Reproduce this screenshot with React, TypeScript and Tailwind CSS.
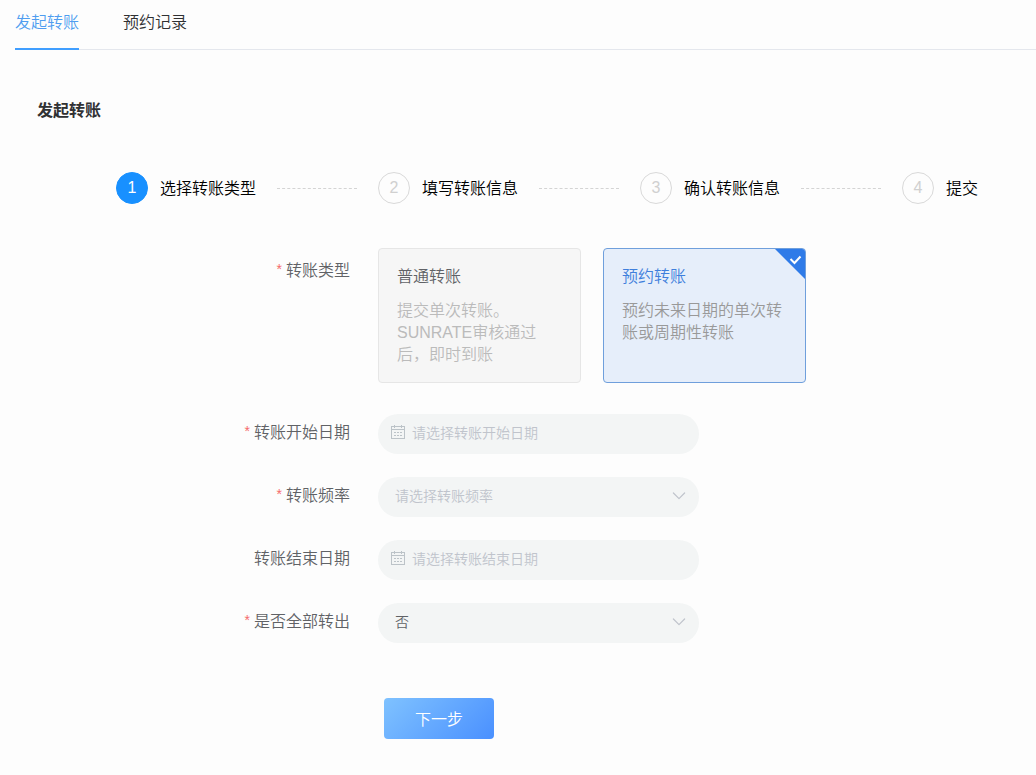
import { useState } from "react";
import type { ReactNode } from "react";
import clsx from "clsx";

const tabs = ["发起转账", "预约记录"];

const steps = ["选择转账类型", "填写转账信息", "确认转账信息", "提交"];

const transferTypes = [
  {
    value: "normal",
    title: "普通转账",
    description: "提交单次转账。SUNRATE审核通过后，即时到账",
  },
  {
    value: "scheduled",
    title: "预约转账",
    description: "预约未来日期的单次转账或周期性转账",
  },
];

function CalendarIcon() {
  return (
    <svg
      className="pointer-events-none absolute left-3 top-2.5 h-4 w-4 text-[#bcc3c8]"
      viewBox="0 0 16 16"
      fill="none"
      stroke="currentColor"
      shapeRendering="crispEdges"
      aria-hidden="true"
    >
      <path d="M1.5 2.5h13v12h-13zM1.5 5.5h13M4.5 0.5v3M11.5 0.5v3" />
      <path d="M4 8.5h2M7 8.5h2M10 8.5h2M4 11.5h2M7 11.5h2M10 11.5h2" />
    </svg>
  );
}

function ArrowIcon() {
  return (
    <svg
      className="pointer-events-none absolute right-3 top-[11px] h-4 w-4 text-[#c0c4cc]"
      viewBox="0 0 16 16"
      fill="none"
      stroke="currentColor"
      strokeWidth="1.2"
      strokeLinecap="round"
      strokeLinejoin="round"
      aria-hidden="true"
    >
      <path d="M2.400 5L8 10.600L13.600 5" />
    </svg>
  );
}

function RequiredMark() {
  return <span className="mr-1 align-[2px] text-sm leading-none text-[#f56c6c]">*</span>;
}

type StepProps = {
  index: number;
  title: string;
  active: boolean;
  last: boolean;
};

function Step({ index, title, active, last }: StepProps) {
  return (
    <li className="flex items-center">
      <span
        className={clsx(
          "flex h-8 w-8 shrink-0 items-center justify-center rounded-full border",
          active
            ? "border-[#1890ff] bg-[#1890ff] text-white"
            : "border-[#d9d9d9] text-[#d0d0d0]"
        )}
      >
        {index}
      </span>
      <span className="ml-3 whitespace-nowrap pt-0.5 text-black">{title}</span>
      {!last && (
        <span className="mx-[21px] w-20 border-t border-dashed border-[#d4d4d4]" />
      )}
    </li>
  );
}

type FieldProps = {
  id: string;
  label: string;
  required?: boolean;
  children: ReactNode;
};

function Field({ id, label, required = false, children }: FieldProps) {
  return (
    <div className="flex gap-7">
      <label
        htmlFor={id}
        className="w-[350px] shrink-0 text-right leading-[38px] text-[#606266]"
      >
        {required && <RequiredMark />}
        {label}
      </label>
      <div className="relative w-full max-w-[321px]">{children}</div>
    </div>
  );
}

function App() {
  const [tab, setTab] = useState(tabs[0]);
  const [type, setType] = useState("scheduled");
  const [frequency, setFrequency] = useState("");
  const [transferAll, setTransferAll] = useState("no");

  return (
    <div className="min-h-screen bg-[#fdfdfd] pb-8 font-['Liberation_Sans','Noto_Sans_CJK_SC',sans-serif] text-base font-[350] leading-[22px]">
      <nav className="pl-[15px]">
        <div className="flex gap-11 border-b border-[#e4e7ed]">
          {tabs.map((name) => (
            <button
              key={name}
              type="button"
              onClick={() => setTab(name)}
              className={clsx(
                "-mb-px border-b-2 pb-3.5 pt-3",
                tab === name
                  ? "border-[#409eff] text-[#4f9df0]"
                  : "border-transparent text-[#303133]"
              )}
            >
              {name}
            </button>
          ))}
        </div>
      </nav>

      <h1 className="mt-[50px] pl-[37px] font-bold text-[#303133]">发起转账</h1>

      <ol className="mt-[50px] flex pl-[116px]">
        {steps.map((title, i) => (
          <Step
            key={title}
            index={i + 1}
            title={title}
            active={i === 0}
            last={i === steps.length - 1}
          />
        ))}
      </ol>

      <form
        className="mt-11 flex flex-col gap-[23px]"
        onSubmit={(e) => e.preventDefault()}
      >
        <div className="mb-2 flex gap-7" role="radiogroup" aria-labelledby="type">
          <span
            id="type"
            className="mt-1 w-[350px] shrink-0 text-right leading-[38px] text-[#606266]"
          >
            <RequiredMark />
            转账类型
          </span>
          <div className="flex gap-[22px]">
            {transferTypes.map((item) => {
              const selected = type === item.value;
              return (
                <label
                  key={item.value}
                  className={clsx(
                    "relative w-[203px] cursor-pointer overflow-hidden rounded border px-[18px] pb-4 pt-[17px]",
                    selected
                      ? "border-[#6f9fdc] bg-[#e6eefa]"
                      : "border-[#e6e6e6] bg-[#f6f6f6]"
                  )}
                >
                  <input
                    type="radio"
                    name="type"
                    value={item.value}
                    checked={selected}
                    onChange={() => setType(item.value)}
                    className="sr-only"
                  />
                  <span
                    className={clsx(
                      "block",
                      selected ? "text-[#3f7fdc]" : "text-[#606266]"
                    )}
                  >
                    {item.title}
                  </span>
                  <span
                    className={clsx(
                      "mt-3 block",
                      selected ? "text-[#999999]" : "text-[#bbbbbb]"
                    )}
                  >
                    {item.description}
                  </span>
                  {selected && (
                    <svg
                      className="absolute -right-px -top-px h-8 w-8"
                      viewBox="0 0 32 32"
                      fill="none"
                      aria-hidden="true"
                    >
                      <path d="M0 0H32V32Z" fill="#2f7be8" />
                      <path
                        d="M16.500 11L20.500 15L26.500 8.500"
                        stroke="#ffffff"
                        strokeWidth="2"
                      />
                    </svg>
                  )}
                </label>
              );
            })}
          </div>
        </div>

        <Field id="start" label="转账开始日期" required>
          <input
            id="start"
            type="text"
            placeholder="请选择转账开始日期"
            className="block h-10 w-full rounded-full bg-[#f3f5f5] pb-0.5 pl-[34px] pr-4 text-sm text-[#606266] outline-none placeholder:text-[#c0c4cc]"
          />
          <CalendarIcon />
        </Field>

        <Field id="frequency" label="转账频率" required>
          <select
            id="frequency"
            value={frequency}
            onChange={(e) => setFrequency(e.target.value)}
            className={clsx(
              "block h-10 w-full appearance-none rounded-full bg-[#f3f5f5] pb-0.5 pl-[17px] pr-10 text-sm outline-none",
              frequency ? "text-[#606266]" : "text-[#c0c4cc]"
            )}
          >
            <option value="">请选择转账频率</option>
          </select>
          <ArrowIcon />
        </Field>

        <Field id="end" label="转账结束日期">
          <input
            id="end"
            type="text"
            placeholder="请选择转账结束日期"
            className="block h-10 w-full rounded-full bg-[#f3f5f5] pb-0.5 pl-[34px] pr-4 text-sm text-[#606266] outline-none placeholder:text-[#c0c4cc]"
          />
          <CalendarIcon />
        </Field>

        <Field id="all" label="是否全部转出" required>
          <select
            id="all"
            value={transferAll}
            onChange={(e) => setTransferAll(e.target.value)}
            className="block h-10 w-full appearance-none rounded-full bg-[#f3f5f5] pb-0.5 pl-[17px] pr-10 text-sm text-[#606266] outline-none"
          >
            <option value="no">否</option>
          </select>
          <ArrowIcon />
        </Field>

        <div className="mt-8 pl-[384px]">
          <button
            type="submit"
            className="h-[41px] w-[110px] rounded bg-linear-[135deg] from-[#7fc2ff] to-[#4a90ff] pt-0.5 text-white"
          >
            下一步
          </button>
        </div>
      </form>
    </div>
  );
}

export default App;
